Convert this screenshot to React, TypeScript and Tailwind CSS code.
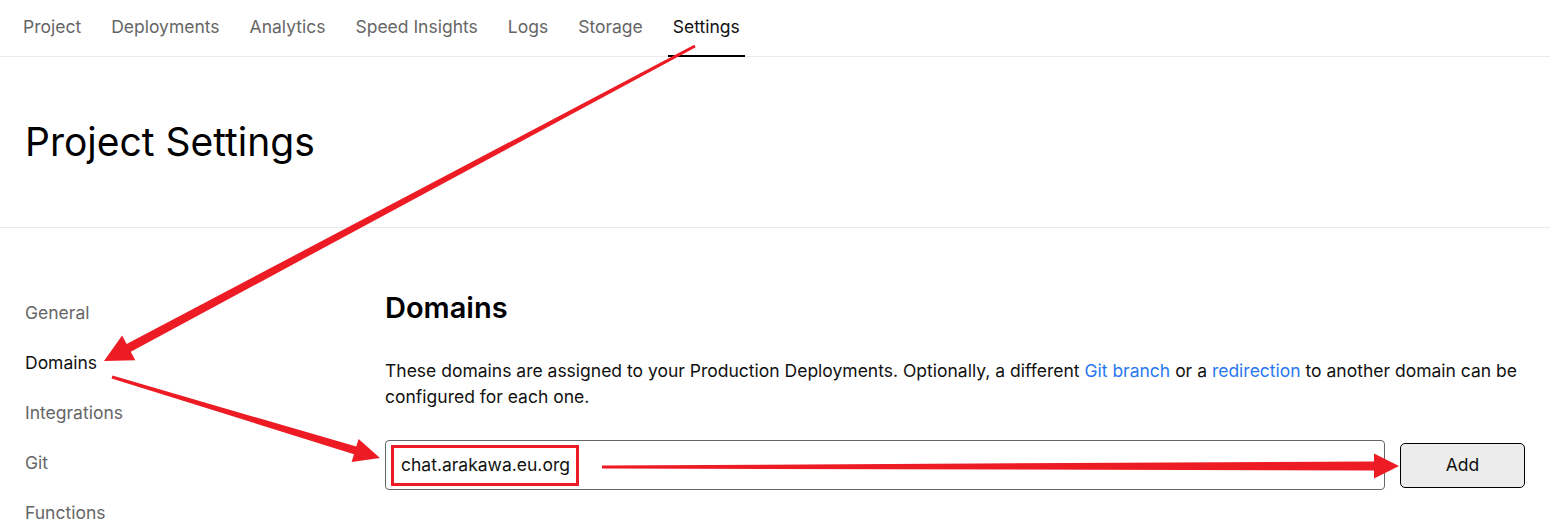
import React from 'react';

const tabs = ['Project', 'Deployments', 'Analytics', 'Speed Insights', 'Logs', 'Storage', 'Settings'];
const sideItems = ['General', 'Domains', 'Integrations', 'Git', 'Functions'];

type Pt = [number, number];

// tapered arrow: thin at start, wider at head base, triangular head
function arrowPoints(from: Pt, tip: Pt, w0: number, w1: number, headLen: number, headHalf: number) {
    const dx = tip[0] - from[0];
    const dy = tip[1] - from[1];
    const len = Math.hypot(dx, dy);
    const ux = dx / len;
    const uy = dy / len;
    const nx = -uy;
    const ny = ux;
    const bx = tip[0] - ux * headLen;
    const by = tip[1] - uy * headLen;
    const pts: Pt[] = [
        [from[0] + nx * w0 / 2, from[1] + ny * w0 / 2],
        [bx + nx * w1 / 2, by + ny * w1 / 2],
        [bx + nx * headHalf, by + ny * headHalf],
        tip,
        [bx - nx * headHalf, by - ny * headHalf],
        [bx - nx * w1 / 2, by - ny * w1 / 2],
        [from[0] - nx * w0 / 2, from[1] - ny * w0 / 2],
    ];
    return pts.map((p) => `${p[0].toFixed(1)},${p[1].toFixed(1)}`).join(' ');
}

const Annotations: React.FC = () => (
    <svg className="absolute inset-0 pointer-events-none" width="1550" height="530" viewBox="0 0 1550 530">
        <polygon points={arrowPoints([695, 46], [104, 361], 3, 9, 28, 14)} fill="#ed1c24" />
        <polygon points={arrowPoints([112, 377], [380, 458], 3, 8, 26, 12)} fill="#ed1c24" />
        <polygon points={arrowPoints([602, 467], [1399, 466], 3, 9, 25, 12.5)} fill="#ed1c24" />
        <rect x="392.5" y="446.5" width="185" height="38" fill="none" stroke="#ed1c24" strokeWidth="3" />
    </svg>
);

export default function App() {
    return (
        <div className="relative w-[1550px] h-[530px] overflow-hidden bg-white font-['Inter',sans-serif]">
            {/* Onglets */}
            <nav className="flex h-[57px] border-b border-[#eaeaea] pl-[18px] gap-[20px]">
                {tabs.map((tab) => (
                    <div
                        key={tab}
                        className={`relative flex items-center px-[5px] pb-[1px] text-[17.5px] ${
                            tab === 'Settings' ? 'text-[#111]' : 'text-[#666]'
                        }`}
                    >
                        {tab}
                        {tab === 'Settings' && (
                            <span className="absolute left-0 right-0 bottom-[-1px] h-[2px] bg-black" />
                        )}
                    </div>
                ))}
            </nav>

            {/* En-tête */}
            <header className="h-[171px] flex items-center px-[25px] border-b border-[#eaeaea]">
                <h1 className="text-[39px] text-black leading-none pb-[2px]">Project Settings</h1>
            </header>

            <div className="flex">
                {/* Navigation latérale */}
                <aside className="w-[385px] pl-[25px] pt-[73px] flex flex-col gap-[26px]">
                    {sideItems.map((item) => (
                        <div
                            key={item}
                            className={`h-[24px] leading-[24px] text-[17.5px] ${
                                item === 'Domains' ? 'text-[#111]' : 'text-[#666]'
                            }`}
                        >
                            {item}
                        </div>
                    ))}
                </aside>

                {/* Contenu */}
                <main className="w-[1140px] pt-[62px]">
                    <h2 className="text-[29px] font-semibold text-black leading-[36px]">Domains</h2>
                    <p className="mt-[32px] text-[17.5px] leading-[26px] text-[#111]">
                        These domains are assigned to your Production Deployments. Optionally, a different{' '}
                        <span className="text-[#2a78f0]">Git branch</span> or a{' '}
                        <span className="text-[#2a78f0]">redirection</span> to another domain can be configured for each one.
                    </p>
                    <div className="mt-[30px] flex items-center gap-[15px]">
                        <div className="flex-1 h-[50px] border border-[#666] rounded-[4px] flex items-center pl-[15px] text-[17.5px] text-[#111]">
                            chat.arakawa.eu.org
                        </div>
                        <button className="w-[125px] h-[45px] bg-[#ececec] border border-black rounded-[5px] text-[17.5px] text-[#111]">
                            Add
                        </button>
                    </div>
                </main>
            </div>

            <Annotations />
        </div>
    );
}
